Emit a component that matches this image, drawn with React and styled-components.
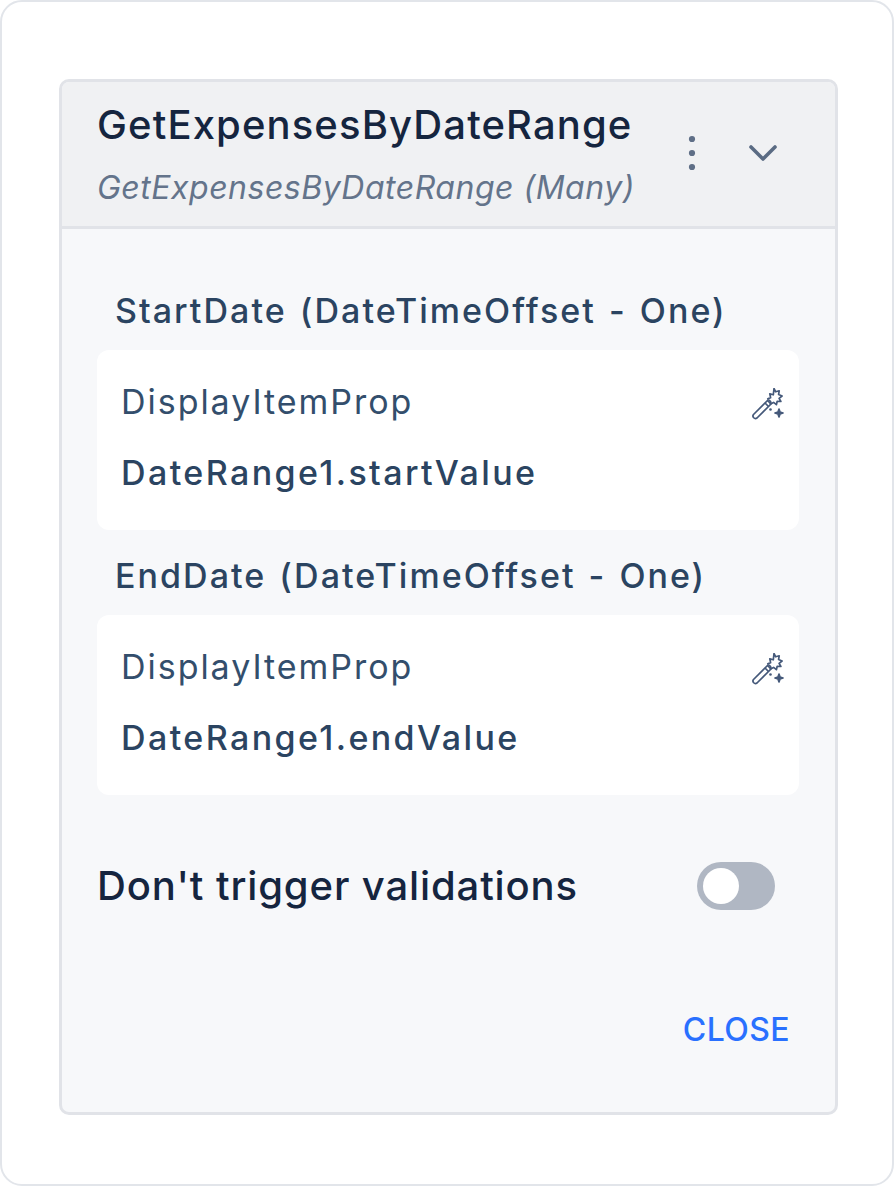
import React from "react";
import styled, { createGlobalStyle } from "styled-components";

const Global = createGlobalStyle`
  html, body {
    margin: 0;
    padding: 0;
    background: #fff;
  }
  * {
    box-sizing: border-box;
  }
`;

const Frame = styled.div`
  width: 894px;
  height: 1186px;
  padding: 77px 54px 69px 57px;
  background: #fff;
  border: 2px solid #e2e5ea;
  border-radius: 22px;
  font-family: Inter, "Liberation Sans", sans-serif;
`;

const Panel = styled.div`
  display: flex;
  flex-direction: column;
  height: 100%;
  background: #f7f8fa;
  border: 3px solid #e1e3e8;
  border-radius: 10px;
`;

const Header = styled.div`
  display: flex;
  align-items: center;
  justify-content: space-between;
  height: 147px;
  padding: 0 56px 0 35px;
  background: #f0f1f3;
  border-bottom: 3px solid #e1e3e8;
  border-radius: 7px 7px 0 0;
`;

const Titles = styled.div`
  display: flex;
  flex-direction: column;
  gap: 22px;
`;

const Title = styled.div`
  color: #15253f;
  font-size: 40px;
  font-weight: 500;
  line-height: 46px;
  letter-spacing: 1.12px;
`;

const Subtitle = styled.div`
  color: #64748b;
  font-size: 32px;
  font-style: italic;
  line-height: 36px;
  letter-spacing: 0.51px;
`;

const HeaderActions = styled.div`
  display: flex;
  align-items: center;
  gap: 48px;
  margin-bottom: 2px;
`;

const Body = styled.div`
  display: flex;
  flex: 1;
  flex-direction: column;
  padding: 62px 36px 0 35px;
`;

const FieldLabel = styled.div`
  padding-left: 18px;
  color: #2b4461;
  font-size: 34px;
  font-weight: 500;
  line-height: 40px;
  letter-spacing: 2.03px;
  word-spacing: 2px;
`;

const FieldCard = styled.div`
  position: relative;
  display: flex;
  flex-direction: column;
  gap: 31px;
  height: 180px;
  margin-top: 19px;
  margin-bottom: ${(p) => p.$gap}px;
  padding: 32px 24px 0;
  background: #fff;
  border-radius: 12px;
`;

const PropName = styled.div`
  color: #334e6c;
  font-size: 34px;
  line-height: 40px;
  letter-spacing: 1.97px;
`;

const PropValue = styled.div`
  color: #2b4461;
  font-size: 34px;
  font-weight: 500;
  line-height: 40px;
  letter-spacing: 2.4px;
`;

const WandSlot = styled.span`
  position: absolute;
  top: 38px;
  right: 15px;
  display: flex;
`;

const ToggleRow = styled.div`
  display: flex;
  align-items: center;
  justify-content: space-between;
  margin-top: 67px;
  padding-right: 24px;
`;

const ToggleLabel = styled.div`
  color: #15253f;
  font-size: 40px;
  font-weight: 500;
  line-height: 46px;
  letter-spacing: 0.88px;
`;

const Toggle = styled.div`
  display: flex;
  align-items: center;
  width: 78px;
  height: 48px;
  padding: 6px;
  background: #b0b7c3;
  border-radius: 24px;
`;

const Knob = styled.div`
  width: 36px;
  height: 36px;
  background: #fff;
  border-radius: 50%;
`;

const Footer = styled.div`
  display: flex;
  justify-content: flex-end;
  margin-top: 100px;
  padding-right: 9px;
`;

const CloseButton = styled.button`
  padding: 0;
  color: #2970ff;
  font: 500 32px/40px Inter, "Liberation Sans", sans-serif;
  letter-spacing: 0.4px;
  background: none;
  border: 0;
`;

const Dots = () => (
  <svg width="14" height="40" viewBox="0 0 14 40" fill="#5f6f87">
    <circle cx="7" cy="6" r="3.1" />
    <circle cx="7" cy="20" r="3.1" />
    <circle cx="7" cy="34" r="3.1" />
  </svg>
);

const Chevron = () => (
  <svg width="32" height="20" viewBox="0 0 32 20" fill="none" stroke="#5a6b83" strokeWidth="3.6" strokeLinecap="round" strokeLinejoin="round">
    <path d="M4 4l12 12L28 4" />
  </svg>
);

// drawn by hand, the wand in the icon packages has a different star
const Wand = () => (
  <svg width="32" height="32" viewBox="0 0 32 32" fill="none" stroke="#45597a" strokeWidth="1.7" strokeLinejoin="round">
    <path d="M1.500 26.500 15.500 12.500l3.500 3.500L5 30a2.500 2.500 0 0 1-3.500-3.500z" />
    <path d="M13 15l3.500 3.500" />
    <path d="M22 0.500l1.700 3.300 3.500-1-.6 3.700 3.500 1.500-3 2.300 1.800 3.200-3.700-.2-.8 3.400-2.800-2.300-3.200 1.600.2-2.400-2.800-2.800 2.800-1.200-.8-3.700 3.500.9z" />
    <path d="M27 21l1 3 3 1-3 1-1 3-1-3-3-1 3-1z" fill="#45597a" />
    <circle cx="18.500" cy="21.500" r="1.300" fill="#45597a" stroke="none" />
  </svg>
);

const fields = [
  { label: "StartDate (DateTimeOffset - One)", value: "DateRange1.startValue", gap: 26 },
  { label: "EndDate (DateTimeOffset - One)", value: "DateRange1.endValue", gap: 0 },
];

export default function App() {
  return (
    <>
      <Global />
      <Frame>
        <Panel>
          <Header>
            <Titles>
              <Title>GetExpensesByDateRange</Title>
              <Subtitle>GetExpensesByDateRange (Many)</Subtitle>
            </Titles>
            <HeaderActions>
              <Dots />
              <Chevron />
            </HeaderActions>
          </Header>
          <Body>
            {fields.map((f) => (
              <div key={f.label}>
                <FieldLabel>{f.label}</FieldLabel>
                <FieldCard $gap={f.gap}>
                  <PropName>DisplayItemProp</PropName>
                  <PropValue>{f.value}</PropValue>
                  <WandSlot>
                    <Wand />
                  </WandSlot>
                </FieldCard>
              </div>
            ))}
            <ToggleRow>
              <ToggleLabel>Don't trigger validations</ToggleLabel>
              <Toggle>
                <Knob />
              </Toggle>
            </ToggleRow>
            <Footer>
              <CloseButton>CLOSE</CloseButton>
            </Footer>
          </Body>
        </Panel>
      </Frame>
    </>
  );
}
